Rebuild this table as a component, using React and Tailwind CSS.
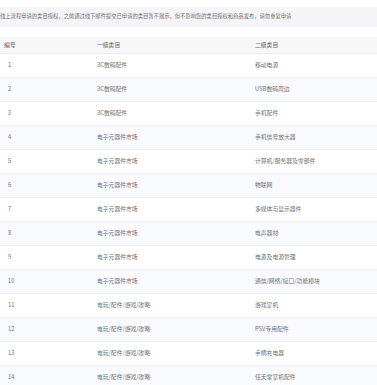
import React from "react";

const rows = [
  ["1", "3C数码配件", "移动电源"],
  ["2", "3C数码配件", "USB数码周边"],
  ["3", "3C数码配件", "手机配件"],
  ["4", "电子元器件市场", "手机信号放大器"],
  ["5", "电子元器件市场", "计算机/服务器及零部件"],
  ["6", "电子元器件市场", "物联网"],
  ["7", "电子元器件市场", "多媒体与显示器件"],
  ["8", "电子元器件市场", "电声器材"],
  ["9", "电子元器件市场", "电源及电源管理"],
  ["10", "电子元器件市场", "通信/网络/接口/功能模块"],
  ["11", "电玩/配件/游戏/攻略", "游戏掌机"],
  ["12", "电玩/配件/游戏/攻略", "PSV专用配件"],
  ["13", "电玩/配件/游戏/攻略", "手柄充电器"],
  ["14", "电玩/配件/游戏/攻略", "任天堂掌机配件"],
];

export default function App() {
  return (
    <div
      className="w-[377px] h-[385px] overflow-hidden bg-white text-[#707070]"
      style={{ fontFamily: '"Noto Sans CJK SC", "Noto Sans", sans-serif' }}
    >
      <div className="mt-[7px] h-[20px] bg-[#f5f5f7] flex items-center text-[5.3px] whitespace-nowrap">
        线上流程申请的类目授权，之前通过线下邮件提交已申请的类目暂不展示，但不影响您的类目授权和商品发布，请勿重复申请
      </div>

      <div className="mt-[10px] grid grid-cols-[97px_158px_1fr] h-[17px] items-center bg-[#f7f7f9] text-[5.8px] text-[#606060] border-b border-[#eeeeee]">
        <div className="pl-[4px]">编号</div>
        <div>一级类目</div>
        <div>二级类目</div>
      </div>

      {rows.map((r, i) => (
        <div
          key={r[0]}
          className={`grid grid-cols-[97px_158px_1fr] h-[24px] items-center text-[5.8px] border-b border-[#f0f0f2] ${
            i % 2 === 1 ? "bg-[#f9fafd]" : "bg-white"
          }`}
        >
          <div className="pl-[8px]">{r[0]}</div>
          <div>{r[1]}</div>
          <div>{r[2]}</div>
        </div>
      ))}
    </div>
  );
}
